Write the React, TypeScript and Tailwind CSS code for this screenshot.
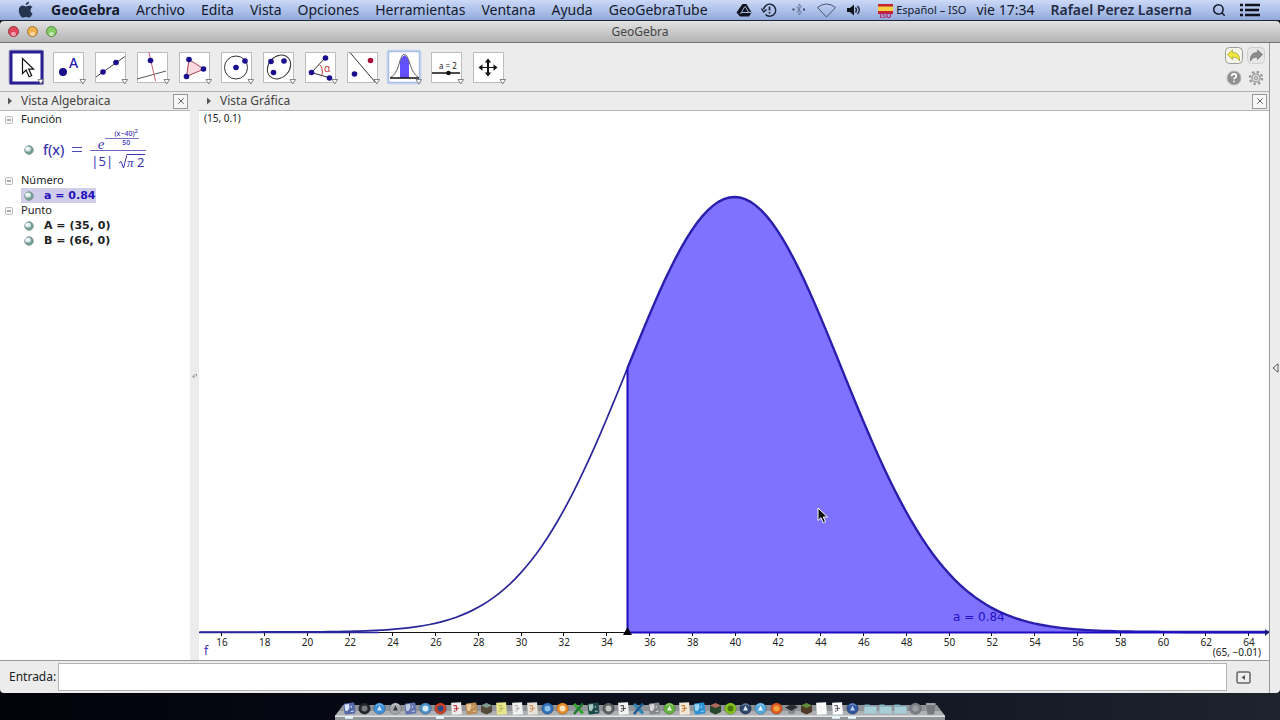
import type { ReactNode } from "react";
import { Search, X } from "lucide-react";

const menus = ["Archivo", "Edita", "Vista", "Opciones", "Herramientas", "Ventana", "Ayuda", "GeoGebraTube"];

const ink = "#1a0f8c";

function Dot({ x, y, r = 2.8, fill = ink }: { x: number; y: number; r?: number; fill?: string }) {
  return <circle cx={x} cy={y} r={r} fill={fill} />;
}

// Every tool is drawn on a 34x34 board, the white tile goes from 2 to 32.
const tools: { name: string; art: ReactNode; state?: "selected" | "glow" }[] = [
  {
    name: "Elige y mueve",
    state: "selected",
    art: <path d="M13.5 8.500v15l3.600-3.400 3 6.600 2.600-1.200-3-6.400h4.800z" fill="#fff" stroke="#111" strokeWidth="1.200" />,
  },
  {
    name: "Punto",
    art: (
      <>
        <Dot x={12} y={22} r={4} />
        <text x="18" y="18" fontSize="14" fontWeight="500" fill="#2a1bb0" fontFamily="Noto Sans, sans-serif">
          A
        </text>
      </>
    ),
  },
  {
    name: "Recta",
    art: (
      <>
        <path d="M3 27 32 6.500" stroke="#444" />
        <Dot x={10} y={22} />
        <Dot x={23} y={12.500} />
      </>
    ),
  },
  {
    name: "Perpendicular",
    art: (
      <>
        <path d="M2 29 31 21" stroke="#555" />
        <path d="M14 2.500 20.500 31" stroke="#cc6070" />
        <Dot x={15.500} y={10.500} />
      </>
    ),
  },
  {
    name: "Polígono",
    art: (
      <>
        <path d="M12 9.500 27 19 9.500 26.500z" fill="#ffd9e0" stroke="#b04050" />
        <Dot x={12} y={9.500} />
        <Dot x={26.500} y={19} />
        <Dot x={9.500} y={26.500} />
      </>
    ),
  },
  {
    name: "Circunferencia",
    art: (
      <>
        <circle cx="17" cy="17.500" r="11.500" fill="none" stroke="#333" />
        <Dot x={17} y={17.500} />
        <Dot x={26} y={11} />
      </>
    ),
  },
  {
    name: "Cónica",
    art: (
      <>
        <ellipse cx="18" cy="17" rx="13" ry="10.500" fill="none" stroke="#333" transform="rotate(-48 18 17)" />
        <Dot x={10} y={11.500} />
        <Dot x={23} y={11} />
        <Dot x={12.500} y={22.500} />
      </>
    ),
  },
  {
    name: "Ángulo",
    art: (
      <>
        <path d="M22 8 8.500 22.500 27 28" fill="none" stroke="#333" />
        <path d="M16.500 14.500q4 4 2.500 10.500" fill="none" stroke="#cc4040" />
        <text x="21" y="22" fontSize="10" fill="#cc4040" fontFamily="Noto Sans, sans-serif">
          α
        </text>
        <Dot x={22.500} y={8} />
        <Dot x={8.500} y={22.500} />
        <Dot x={26.500} y={28} />
      </>
    ),
  },
  {
    name: "Simetría",
    art: (
      <>
        <path d="M5 2.500 30 32" stroke="#333" />
        <Dot x={9.500} y={24} />
        <Dot x={25.500} y={10.500} fill="#aa1038" />
      </>
    ),
  },
  {
    name: "Probabilidad",
    state: "glow",
    art: (
      <>
        <path d="M13 28V11q4.500-11 9 0v17z" fill="#6250ff" />
        <path d="M4 27q5-2 8-13t5.500-9.500Q20 4 23 14t8 13" fill="none" stroke="#666" />
        <path d="M3 28h29" stroke="#111" strokeWidth="1.500" />
      </>
    ),
  },
  {
    name: "Deslizador",
    art: (
      <>
        <text x="10" y="19" fontSize="8" fill="#222" fontFamily="Noto Sans, sans-serif">
          a = 2
        </text>
        <path d="M3 23h28" stroke="#111" strokeWidth="1.500" />
        <Dot x={19.500} y={23} r={2.300} fill="#111" />
      </>
    ),
  },
  {
    name: "Desplaza vista gráfica",
    art: (
      <path
        d="M17 8.500l3.200 4h-2.200v4.500h4.500v-2.700l4 3.200-4 3.200v-2.700h-4.500v4.500h2.200l-3.200 4-3.200-4h2.200v-4.500h-4.500v2.700l-4-3.200 4-3.200v2.700h4.500v-4.500h-2.200z"
        fill="#111"
      />
    ),
  },
];

const boardFrame = {
  selected: { x: 2, size: 31, stroke: "#2a1f92", width: 3 },
  glow: { x: 1.5, size: 31, stroke: "#a9bfe8", width: 1.5 },
  plain: { x: 2.5, size: 30, stroke: "#bcbcbc", width: 1 },
};

const boardHalo = { selected: "#b3b0cc", glow: "#cdd9ef" };

function ToolButton({ name, art, state }: (typeof tools)[number]) {
  const frame = boardFrame[state ?? "plain"];
  return (
    <button type="button" aria-label={name} className="h-[34px] w-[34px] shrink-0">
      <svg viewBox="0 0 34 34" className="h-[34px] w-[34px] overflow-visible">
        {state && <rect x="-0.500" y="-0.500" width="35" height="35" rx="3" fill={boardHalo[state]} />}
        <rect
          x={frame.x}
          y={frame.x}
          width={frame.size}
          height={frame.size}
          fill="#fff"
          stroke={frame.stroke}
          strokeWidth={frame.width}
        />
        <g fill="none">{art}</g>
        <path d="M29 29.500h5.500l-2.700 4.500z" fill="#fff" stroke="#777" strokeWidth="0.900" />
      </svg>
    </button>
  );
}

function MenuBar() {
  return (
    <header className="flex h-[21px] shrink-0 items-center border-b border-[#1c2436] bg-gradient-to-b from-[#ccd9f7] to-[#92aadb] pr-5 pl-[18px] text-sm leading-5 text-[#141a2c]">
      <svg viewBox="0 0 16 18" className="mr-[17px] h-[18px] w-4 shrink-0" fill="#25344f" aria-hidden="true">
        <path d="M11 .5c.1 2-1.500 3.700-3.300 3.600C7.500 2.300 9.200.7 11 .5zM14.500 12.600c-.8 2.100-2 4-3.500 4-1.100 0-1.500-.7-2.900-.7s-1.900.7-2.900.7C3 16.600.8 12.700.8 9.300c0-3.200 2-4.700 3.900-4.700 1.300 0 2.300.8 3.200.8.800 0 2.100-.9 3.700-.9 1 0 2.200.5 2.900 1.600-2.800 1.700-2.400 5.400 0 6.500z" />
      </svg>
      <nav className="flex gap-4">
        <a href="#app" className="font-bold">
          GeoGebra
        </a>
        {menus.map((menu) => (
          <a key={menu} href={`#${menu}`}>
            {menu}
          </a>
        ))}
      </nav>
      <div className="ml-auto flex shrink-0 items-center">
        <svg viewBox="0 0 136 18" className="mr-[6px] h-[18px] w-[136px]" fill="none" stroke="#1b2233" aria-hidden="true">
          <path d="M6.500 3h4l5 8.500-2.500 4H4l-3.500-4z" fill="#10131c" stroke="none" />
          <path d="M8.500 6 4.500 13M6 11.500h9M9 5l4 7" stroke="#a9bce6" />
          <path d="M29.500 13.500a6 6 0 1 0-1.800-5M25.500 7.500l2.200 3.500 3-2.500" strokeWidth="1.400" />
          <path d="M33.500 5.500v4M33.500 11v1.500" strokeWidth="1.700" />
          <path d="M60.500 5.500l5 6-2.500 2.500v-11l2.500 2.500-5 6" stroke="#66789d" />
          <path d="M56.500 8.500h2M67 8.500h2" stroke="#3a4864" strokeWidth="2" />
          <path d="M81.500 6.500q9-7 18 0L90.500 16z" stroke="#45536f" />
          <path d="M111 7h3l4-3.500v11L114 11h-3z" fill="#10131c" stroke="none" />
          <path d="M119.500 6.500q2 2.500 0 5M121.500 5q3.500 4 0 8" strokeWidth="1.300" />
        </svg>
        <svg viewBox="0 0 16 18" className="mr-[2px] h-[18px] w-4" aria-hidden="true">
          <path d="M0 3h15v10H0z" fill="#c22332" />
          <path d="M0 5.500h15v4.500H0z" fill="#f5cf45" />
          <text x="1.500" y="17" fontSize="7" fontWeight="700" fill="#b0206a" fontFamily="Noto Sans, sans-serif">
            ISO
          </text>
        </svg>
        <span className="mr-[10px] text-[11px]">Español – ISO</span>
        <span className="mr-4">vie 17:34</span>
        <span className="mr-5 font-semibold text-[#242c44]">Rafael Perez Laserna</span>
        <button type="button" aria-label="Spotlight" className="mr-[14px]">
          <Search className="h-[14px] w-[14px]" strokeWidth={2.600} />
        </button>
        <button type="button" aria-label="Centro de notificaciones">
          <svg viewBox="0 0 20 14" className="h-[14px] w-5" stroke="#10131c" strokeWidth="2.400">
            <path d="M0 2h3M5 2h15M0 7h3M5 7h14M0 12h3M5 12h15" />
          </svg>
        </button>
      </div>
    </header>
  );
}

function TitleBar() {
  const lights = [
    { name: "Cerrar", face: "bg-[#e0475a] border-[#8e3540]" },
    { name: "Minimizar", face: "bg-[#eeb04c] border-[#9c7434]" },
    { name: "Ampliar", face: "bg-[#86cc66] border-[#55893f]" },
  ];
  return (
    <div className="relative flex h-[22px] shrink-0 items-center justify-center rounded-t border-b border-[#777] bg-gradient-to-b from-[#e2e2e2] to-[#b4b4b4]">
      <div className="absolute left-2 flex gap-2">
        {lights.map((light) => (
          <button
            key={light.name}
            type="button"
            aria-label={light.name}
            className={`flex h-[11px] w-[11px] items-end justify-center rounded-full border ${light.face}`}
          >
            <span className="h-1 w-[5px] rounded-full bg-white/50" />
          </button>
        ))}
      </div>
      <h1 className="text-xs text-[#444]">GeoGebra</h1>
    </div>
  );
}

function Toolbar() {
  return (
    <div className="flex h-[49px] shrink-0 items-center border-b border-[#b4b4b4] pr-1 pl-[9px]">
      <div className="flex gap-2" role="toolbar" aria-label="Herramientas">
        {tools.map((tool) => (
          <ToolButton key={tool.name} {...tool} />
        ))}
      </div>
      <div className="ml-auto grid grid-cols-2 gap-x-1 gap-y-1">
        <button type="button" aria-label="Deshace">
          <svg viewBox="0 0 18 18" className="h-[18px] w-[18px]">
            <rect x="0.500" y="0.500" width="17" height="16" rx="4" fill="#f4f4e8" stroke="#9a9a9a" />
            <path d="M2.500 7.500 7.500 3v2.500c5 0 7.500 3 7 8.500-1.500-3-3.500-4-7-4v2.500z" fill="#f0e83c" stroke="#a9a13a" strokeWidth="0.800" />
          </svg>
        </button>
        <button type="button" aria-label="Rehace">
          <svg viewBox="0 0 18 18" className="h-[18px] w-[18px]">
            <rect x="0.500" y="0.500" width="17" height="16" rx="4" fill="#e6e6e6" stroke="#cfcfcf" />
            <path d="M15.500 7.500 10.500 3v2.500c-5 0-7.500 3-7 8.500 1.500-3 3.500-4 7-4v2.500z" fill="#8d8d8d" stroke="#777" strokeWidth="0.800" />
          </svg>
        </button>
        <button type="button" aria-label="Ayuda">
          <svg viewBox="0 0 18 18" className="h-[18px] w-[18px]">
            <circle cx="9" cy="9" r="7" fill="#8f8f8f" stroke="#bbb" />
            <path d="M6.700 7.200q0-2.400 2.300-2.400t2.300 2.100q0 1.200-1.300 1.800-1 .5-1 1.500M9 11.800v1.500" fill="none" stroke="#fff" strokeWidth="1.700" />
          </svg>
        </button>
        <button type="button" aria-label="Preferencias">
          <svg viewBox="0 0 18 18" className="h-[18px] w-[18px]" fill="none">
            <circle cx="9" cy="9" r="6" stroke="#9a9a9a" strokeWidth="2.500" strokeDasharray="2.400 2.300" />
            <circle cx="9" cy="9" r="4" fill="#ddd" stroke="#a5a5a5" strokeWidth="1.500" />
            <circle cx="9" cy="9" r="1.500" fill="#f4f4f4" stroke="#888" />
          </svg>
        </button>
      </div>
    </div>
  );
}

function PanelHeader({ title }: { title: string }) {
  return (
    <div className="flex h-[19px] shrink-0 items-center border-b border-[#b4b4b4] pr-[2px] pl-2 text-xs text-[#444]">
      <svg viewBox="0 0 5 8" className="mr-2 h-2 w-[5px]" fill="#555" aria-hidden="true">
        <path d="M0 .5 4 4 0 7.500z" />
      </svg>
      <h2>{title}</h2>
      <button
        type="button"
        aria-label={`Cerrar ${title}`}
        className="ml-auto flex h-[15px] w-[15px] items-center justify-center border border-[#999] bg-[#f6f6f6]"
      >
        <X className="h-[10px] w-[10px]" />
      </button>
    </div>
  );
}

function Marble() {
  return (
    <button type="button" aria-label="Muestra u oculta" className="h-[10px] w-[10px] shrink-0">
      <svg viewBox="0 0 10 10" className="h-[10px] w-[10px]">
        <circle cx="5" cy="5" r="4.300" fill="#6fa08f" stroke="#8b9b9f" />
        <ellipse cx="4" cy="4" rx="3" ry="2.600" fill="#d3e6ea" />
        <circle cx="3.500" cy="3.500" r="1.300" fill="#fff" />
      </svg>
    </button>
  );
}

function Group({ title, children }: { title: string; children: ReactNode }) {
  return (
    <section>
      <div className="flex h-[15px] items-center gap-2 pl-[5px] text-[11px] text-[#222]">
        <button type="button" aria-label={`Contrae ${title}`} className="h-2 w-2 shrink-0">
          <svg viewBox="0 0 8 8" className="h-2 w-2" fill="none">
            <rect x="0.500" y="0.500" width="7" height="7" rx="1" fill="#f4f4f4" stroke="#bbb" />
            <path d="M2 4h4" stroke="#666" />
          </svg>
        </button>
        <h3>{title}</h3>
      </div>
      {children}
    </section>
  );
}

function PointRow({ children }: { children: ReactNode }) {
  return (
    <div className="flex h-[15px] items-center gap-[10px] pl-6 font-['DejaVu_Sans',sans-serif] text-[11px] leading-[15px] font-bold text-[#222]">
      <Marble />
      <span>{children}</span>
    </div>
  );
}

function Formula() {
  return (
    <div className="flex h-[46px] items-center gap-[9px] pl-6 text-[#3934b0]">
      <Marble />
      <div className="flex items-center gap-2 pb-px">
        <span className="text-sm font-medium">f(x)</span>
        <span className="flex w-[10px] flex-col gap-[3px]" role="img" aria-label="=">
          <span className="h-px bg-[#4a46b4]" />
          <span className="h-px bg-[#4a46b4]" />
        </span>
        <div className="flex flex-col items-center">
          <div className="flex items-end gap-px">
            <span className="font-['Liberation_Serif',serif] text-[15px] leading-3 italic">e</span>
            <div className="flex items-center pb-[3px] text-[7px] leading-2">
              <span className="h-px w-2 bg-[#7774c4]" />
              <span className="flex flex-col items-center font-medium">
                <span className="border-b border-[#7774c4] px-px">
                  (x−40)<sup className="text-[6px] leading-none">2</sup>
                </span>
                <span>50</span>
              </span>
            </div>
          </div>
          <div className="flex items-end gap-[6px] border-t border-[#6a66bd] px-px pt-[2px] text-[13px] leading-4">
            <span>|5|</span>
            <span className="flex items-end">
              <svg viewBox="0 0 8 15" className="h-[15px] w-2" fill="none" stroke="#3934b0" aria-hidden="true">
                <path d="M0 9l2-1.500L4.500 14 8 .5" />
              </svg>
              <span className="h-[15px] border-t border-[#3934b0] pr-px leading-[14px]">
                <i className="font-['Liberation_Serif',serif]">π</i> 2
              </span>
            </span>
          </div>
        </div>
      </div>
    </div>
  );
}

function AlgebraView() {
  return (
    <section className="flex w-[190px] shrink-0 flex-col">
      <PanelHeader title="Vista Algebraica" />
      <div className="flex-1 bg-white pt-px">
        <Group title="Función">
          <Formula />
        </Group>
        <Group title="Número">
          <div className="ml-[21px] flex h-[15px] w-[75px] items-center gap-[10px] bg-[#cfcdea] pl-[3px] font-['DejaVu_Sans',sans-serif] text-[11px] leading-[15px] font-bold text-[#2412bb]">
            <Marble />
            <span className="whitespace-nowrap">a = 0.84</span>
          </div>
        </Group>
        <Group title="Punto">
          <PointRow>A = (35, 0)</PointRow>
          <PointRow>B = (66, 0)</PointRow>
        </Group>
      </div>
    </section>
  );
}

const baseline = 521;
const unit = 21.4;
const toX = (v: number) => 535.5 + (v - 40) * unit;
const toY = (v: number) => baseline - 435 * Math.exp(-((v - 40) ** 2) / 50);

function curve(from: number, to: number) {
  const points: string[] = [];
  for (let v = from; v <= to + 0.01; v += 0.25) {
    points.push(`${toX(v).toFixed(2)},${toY(v).toFixed(2)}`);
  }
  return points.join(" ");
}

const ticks = Array.from({ length: 25 }, (_, i) => 16 + i * 2);

function GraphicsView() {
  return (
    <section className="flex min-w-0 flex-1 flex-col">
      <PanelHeader title="Vista Gráfica" />
      <div className="min-h-0 flex-1 bg-white">
        <svg viewBox="0 0 1070 549" className="h-full w-full" fontFamily="Noto Sans, sans-serif" fontSize="10" fill="#222">
          <path d={`M0 ${baseline + 0.5}H1068`} stroke="#111" />
          {ticks.map((v) => (
            <g key={v}>
              <path d={`M${Math.round(toX(v)) + 0.5} ${baseline}v4`} stroke="#111" />
              <text x={toX(v) + 1} y="535" textAnchor="middle">
                {v}
              </text>
            </g>
          ))}
          <polygon points={`${toX(35)},${baseline} ${curve(35, 65)} ${toX(65)},${baseline}`} fill="#7f72ff" />
          <polyline points={curve(15, 35)} fill="none" stroke="#2a2699" strokeWidth="1.700" />
          <polyline points={curve(35, 65)} fill="none" stroke="#2a1fad" strokeWidth="2.400" />
          <path d={`M0 ${baseline + 0.5}H180`} stroke="#2a2699" strokeWidth="1.700" />
          <path d={`M${toX(35)} ${toY(35)}V${baseline + 0.5}H1068`} fill="none" stroke="#1d0cc0" strokeWidth="2" />
          <path d={`M1066 ${baseline - 3}l4 3.500-4 3.500z`} fill="#1b1b70" />
          <path d={`M${toX(35)} ${baseline - 5}l4.500 8h-9z`} fill="#050505" />
          <text x="754" y="510" fontSize="12" fill="#2410c4" fontFamily="DejaVu Sans, sans-serif">
            a = 0.84
          </text>
          <text x="5" y="11">
            (15, 0.1)
          </text>
          <text x="1062" y="545" textAnchor="end">
            (65, −0.01)
          </text>
          <text x="5" y="544" fontSize="12" fill="#3a34c0">
            f
          </text>
          {/* pointer */}
          <path d="M619 397v12.500l3-2.800 2.200 5 2.300-1-2.200-4.700h4.200z" fill="#111" stroke="#fff" />
        </svg>
      </div>
    </section>
  );
}

type DockShape = "disc" | "ring" | "tile" | "page" | "cap" | "block" | "folder" | "trash" | "cross";

const dockApps: [string, DockShape, string, string][] = [
  ["Finder", "tile", "#5468a8", "#d9e2f6"],
  ["Dashboard", "ring", "#25272c", "#77797d"],
  ["App Store", "disc", "#3b8fdc", "#cfe6fa"],
  ["Launchpad", "disc", "#a3a6aa", "#36383c"],
  ["Mail", "tile", "#6474ad", "#c3cbe4"],
  ["Safari", "ring", "#4a8fc6", "#d8eaf5"],
  ["Firefox", "ring", "#cf3f24", "#2c4a86"],
  ["Calendario", "page", "#f0eeec", "#b4313a"],
  ["Contactos", "tile", "#bd8d52", "#e7c898"],
  ["Fotos", "block", "#564a3c", "#7d9a8c"],
  ["Notas", "page", "#e8e68a", "#b9b75c"],
  ["Libreta", "page", "#f2f2f2", "#b2b2b8"],
  ["iPhoto", "page", "#e6e2d8", "#cf8a58"],
  ["iTunes", "ring", "#2f6fb8", "#8dc0ec"],
  ["iBooks", "ring", "#e98a25", "#fbe3c1"],
  ["Excel", "cross", "#3aa636", "#1e7a2b"],
  ["FaceTime", "tile", "#1f4a4a", "#a7c8c0"],
  ["Utilidades", "ring", "#5d5f62", "#c5c5c5"],
  ["TeX", "page", "#f4f4f4", "#444444"],
  ["Word", "cross", "#2e86b8", "#1b5c94"],
  ["Correo", "tile", "#85868a", "#d8d8d8"],
  ["uTorrent", "disc", "#64b33c", "#eaf6df"],
  ["Pages", "page", "#f2e8da", "#cc7428"],
  ["Xcode", "tile", "#2c92d4", "#9fd4f4"],
  ["Juego", "block", "#27462c", "#b06a5a"],
  ["Spotify", "ring", "#86c51e", "#4d7512"],
  ["Steam", "disc", "#2c456c", "#dfe7f0"],
  ["Nube", "disc", "#54a9dc", "#eaf6fc"],
  ["Origin", "ring", "#da5a22", "#f0a23c"],
  ["Birrete", "cap", "#2b2d30", "#84878a"],
  ["Minecraft", "block", "#4f3a28", "#5f8b3c"],
  ["Documento", "page", "#fbfbfb", "#eeeeee"],
  ["GeoGebra", "page", "#ffffff", "#55565e"],
  ["Grabadora", "disc", "#31569c", "#b9cdf0"],
];

const dockPlaces: [string, DockShape, string, string][] = [
  ["Aplicaciones", "folder", "#86b4c2", "#a8ced8"],
  ["Documentos", "folder", "#86b4c2", "#a8ced8"],
  ["Descargas", "folder", "#86b4c2", "#a8ced8"],
  ["Servidor", "ring", "#7d8086", "#9a9da3"],
  ["Papelera", "trash", "#77797f", "#b6b8bc"],
];

function DockIcon({ name, shape, main, accent }: { name: string; shape: DockShape; main: string; accent: string }) {
  return (
    <button type="button" aria-label={name} className="h-[13px] w-[13px] shrink-0">
      <svg viewBox="0 0 13 13" className="h-[13px] w-[13px]">
        {shape === "disc" && (
          <>
            <circle cx="6.500" cy="6.500" r="5.800" fill={main} stroke="#0003" />
            <path d="M4 8.500 6.500 3.500 9 8.500z" fill={accent} />
            <path d="M3 4q3.500-4 7 0" fill="none" stroke="#fff6" />
          </>
        )}
        {shape === "ring" && (
          <>
            <circle cx="6.500" cy="6.500" r="5.800" fill={main} stroke="#0003" />
            <circle cx="6.500" cy="6.500" r="3" fill={accent} />
          </>
        )}
        {shape === "tile" && (
          <g transform="rotate(-6 6.500 6.500)">
            <rect x="1" y="1" width="11" height="11" rx="1.500" fill={main} />
            <path d="M2 2h4.500v4L4 9 2 8z" fill={accent} />
            <path d="M7.500 9.500h3M8.500 4v2" stroke={accent} />
          </g>
        )}
        {shape === "page" && (
          <g transform="rotate(-4 6.500 6.500)">
            <rect x="1.500" y="0.500" width="10" height="12" fill={main} />
            <path d="M3.500 3.500h3.500M4 6.500h5M6.500 4v5M3.500 9h2" fill="none" stroke={accent} />
          </g>
        )}
        {shape === "cap" && (
          <>
            <path d="M0 5.500 7 2l6 3-6.500 4z" fill={main} />
            <path d="M3 8v3q3.500 2 7 0V7L6.500 9.500z" fill={accent} />
          </>
        )}
        {shape === "block" && (
          <>
            <path d="M1 3.500 6.500 1 12 3.500v6.500L6.500 12.500 1 10z" fill={main} />
            <path d="M1 3.500 6.500 1 12 3.500 6.500 6z" fill={accent} />
          </>
        )}
        {shape === "folder" && (
          <>
            <path d="M.5 2.500h5l1 1.500h6v7.500H.5z" fill={main} />
            <path d="M.5 5h12v6.500H.5z" fill={accent} />
          </>
        )}
        {shape === "trash" && (
          <>
            <path d="M2 1.500h9.500L10 12.500H3.500z" fill={main} />
            <path d="M2 2h9.500" stroke={accent} strokeWidth="1.500" />
          </>
        )}
        {shape === "cross" && (
          <>
            <path d="M2 2l9 9.500" stroke={main} strokeWidth="3.200" />
            <path d="M11 1.500 2 12" stroke={accent} strokeWidth="2.500" />
          </>
        )}
      </svg>
    </button>
  );
}

function Dock() {
  return (
    <footer className="flex h-[27px] shrink-0 items-end justify-center bg-gradient-to-r from-[#02030a] via-[#0b101c] to-[#1d242e]">
      <div className="relative flex h-[18px] w-[610px] items-start justify-between px-2">
        <svg viewBox="0 0 610 18" preserveAspectRatio="none" className="absolute inset-0 h-full w-full" aria-hidden="true">
          <path d="M8 3h594l8 11H0z" fill="#909398" />
          <path d="M4 9h602l4 5H0z" fill="#aeb0b3" />
          <path d="M0 13.500h610v1.500H0z" fill="#e4e6e8" />
          <path d="M0 15h610v3H0z" fill="#92959a" />
          <path d="M10 15.500h8M101 15.500h8M497 15.500h8M513 15.500h8" stroke="#e8f8ff" strokeWidth="2.500" />
        </svg>
        <div className="relative flex w-[516px] justify-between">
          {dockApps.map(([name, shape, main, accent]) => (
            <DockIcon key={name} name={name} shape={shape} main={main} accent={accent} />
          ))}
        </div>
        <div className="relative flex w-[73px] justify-between">
          {dockPlaces.map(([name, shape, main, accent]) => (
            <DockIcon key={name} name={name} shape={shape} main={main} accent={accent} />
          ))}
        </div>
      </div>
    </footer>
  );
}

export default function App() {
  return (
    <div className="flex h-screen flex-col overflow-hidden bg-[#05070f] font-['Noto_Sans',sans-serif]">
      <MenuBar />
      <main className="flex min-h-0 flex-1 flex-col">
        <TitleBar />
        <div className="flex min-h-0 flex-1 rounded-b bg-[#ececec]">
          <div className="flex min-w-0 flex-1 flex-col border-r border-[#999]">
            <Toolbar />
            <div className="flex min-h-0 flex-1">
              <AlgebraView />
              <div className="flex w-[9px] shrink-0 items-center justify-center">
                <svg viewBox="0 0 5 4" className="h-1 w-[5px]" fill="#999" aria-hidden="true">
                  <path d="M0 3 2.500 0v4zM3 0h2v3z" />
                </svg>
              </div>
              <GraphicsView />
            </div>
            <form className="flex h-[33px] shrink-0 items-center border-t border-[#999] pr-[18px] pl-[9px] text-xs text-[#222]">
              <label htmlFor="entrada" className="mr-[2px]">
                Entrada:
              </label>
              <input id="entrada" type="text" className="h-7 min-w-0 flex-1 border border-[#b4b4b4] bg-white px-1 outline-none" />
              <button type="button" aria-label="Ayuda de entrada" className="ml-[9px]">
                <svg viewBox="0 0 15 13" className="h-[13px] w-[15px]">
                  <rect x="1" y="1" width="13" height="11" rx="1.500" fill="#eee" stroke="#666" strokeWidth="1.500" />
                  <path d="M9 4v5L5.500 6.500z" fill="#555" />
                </svg>
              </button>
            </form>
          </div>
          <aside className="flex w-[10px] shrink-0 items-center justify-center">
            <button type="button" aria-label="Muestra barra lateral">
              <svg viewBox="0 0 7 10" className="h-[10px] w-[7px]" fill="#fff" stroke="#555">
                <path d="M6 .8v8.400L1 5z" />
              </svg>
            </button>
          </aside>
        </div>
      </main>
      <Dock />
    </div>
  );
}
